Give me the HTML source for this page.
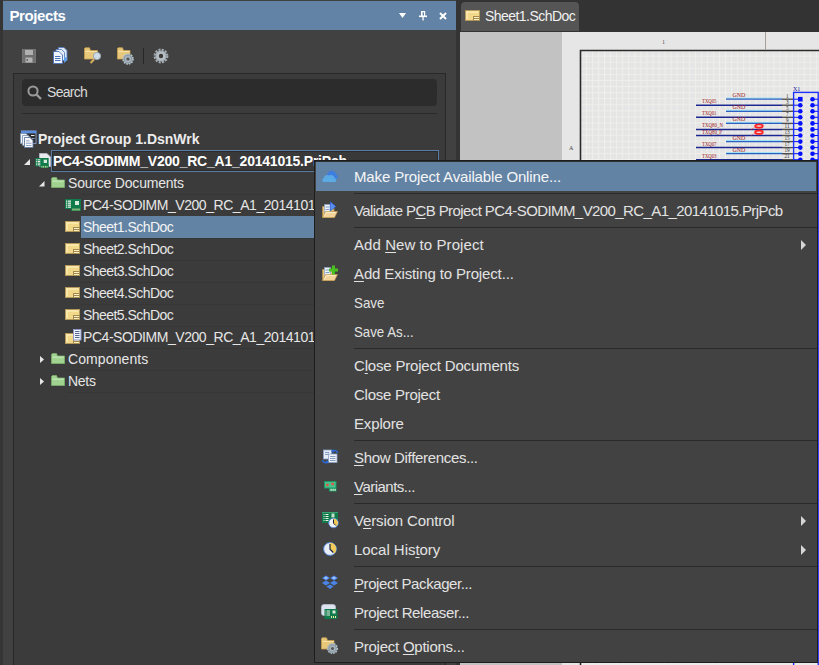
<!DOCTYPE html>
<html><head><meta charset="utf-8">
<style>
*{margin:0;padding:0;box-sizing:border-box}
html,body{width:819px;height:665px;overflow:hidden;background:#333333;font-family:"Liberation Sans",sans-serif}
.abs{position:absolute}
#lstrip{left:0;top:0;width:3px;height:665px;background:#353535}
#panel{left:3px;top:0;width:453px;height:665px;background:#414141}
#title{left:3px;top:1px;width:453px;height:29px;background:#6283a5;color:#fff;font-weight:bold;font-size:15px}
#title .t{position:absolute;left:6.5px;top:6px;letter-spacing:-0.4px}
#rstrip{left:456px;top:0;width:4px;height:665px;background:#343434}
#tabbar{left:460px;top:0;width:359px;height:32px;background:#333333}
#tab{left:461px;top:2px;width:118px;height:29px;background:#555555;border-radius:4px 4px 0 0;color:#f0f0f0;font-size:14px}
#sch{left:460px;top:32px;width:359px;height:633px;background:#c2c2c2;overflow:hidden}
#cont{left:13px;top:73px;width:433px;height:600px;border:1px solid #282828;background:#3b3b3b}
#search{left:22px;top:79px;width:415px;height:27px;background:#2c2c2c;border-radius:4px;color:#dadada;font-size:14px}
#sline{left:22px;top:113px;width:415px;height:1px;background:#2a2a2a}
.row{position:absolute;height:22px;font-size:14px;letter-spacing:-0.3px;color:#e6e6e6;white-space:nowrap}
.sh{letter-spacing:-0.55px}
.row .txt{position:absolute;top:3px}
.sep2{position:absolute;height:1px;background:#363636}
#menu{left:314px;top:160px;width:504px;height:503px;background:#424242;border:2px solid #1e1e1e;border-right:1px solid #1e1e1e;border-bottom:1px solid #1e1e1e;color:#e2e2e2;font-size:15px}
.mi{position:absolute;left:0;width:500px;height:29px;white-space:nowrap}
.mi .txt{position:absolute;left:38px;top:6px}
.mi.hl{background:#6283a4;color:#f6f6f6}
.ms{position:absolute;left:38px;width:463px;height:1px;background:#2a2a2a}
.u{text-decoration:underline;text-underline-offset:2px}
.arr{position:absolute;left:485px;top:10px;width:0;height:0;border-left:5px solid #d6d6d6;border-top:5px solid transparent;border-bottom:5px solid transparent}
svg{position:absolute;overflow:visible}
</style></head><body>
<div class="abs" id="lstrip"></div>
<div class="abs" id="panel"></div>
<div class="abs" id="title"><span class="t">Projects</span></div>
<svg style="left:399px;top:13px" width="8" height="6"><polygon points="0,0 7,0 3.5,5" fill="#ffffff"/></svg>
<svg style="left:419px;top:10px" width="8" height="11" viewBox="0 0 8 11">
 <rect x="2" y="1" width="1.6" height="5" fill="#fff"/><rect x="2" y="1" width="4" height="1.3" fill="#fff"/><rect x="5" y="1" width="1.2" height="5" fill="#fff"/>
 <rect x="0" y="5.5" width="8" height="1.6" fill="#fff"/><rect x="3.4" y="7" width="1.3" height="3.5" fill="#fff"/>
</svg>
<svg style="left:439px;top:12px" width="8" height="8"><path d="M1 1 L7 7 M7 1 L1 7" stroke="#fff" stroke-width="2"/></svg>

<div class="abs" id="rstrip"></div>
<div class="abs" id="tabbar"></div>
<div class="abs" id="tab"><svg style="left:4px;top:8px" width="15" height="11"><use href="#sheet" width="15" height="11"/></svg><span style="position:absolute;left:24px;top:6px;letter-spacing:-0.55px">Sheet1.SchDoc</span></div>
<div class="abs" id="sch"><svg style="left:0;top:0" width="359" height="633" viewBox="460 32 359 633">
<defs><pattern id="grid" x="579.9" y="49.6" width="6.05" height="6.08" patternUnits="userSpaceOnUse"><rect width="6.1" height="6.1" fill="#e5e5e5"/><rect x="0" y="0" width="6.1" height="1" fill="#efefeb"/><rect x="0" y="0" width="1" height="6.1" fill="#efefeb"/></pattern></defs>
<rect x="460" y="32" width="102" height="633" fill="#c2c2c2"/>
<rect x="562" y="32" width="257" height="633" fill="#e6e6e6"/>
<rect x="581" y="51" width="238" height="614" fill="url(#grid)"/>
<path d="M580.5 665 V50.5 H819" fill="none" stroke="#2a2a2a" stroke-width="1.6"/>
<line x1="765.5" y1="32" x2="765.5" y2="50" stroke="#a8a098" stroke-width="1"/>
<text x="662" y="43.5" font-family="Liberation Serif" font-size="6" fill="#555">1</text>
<text x="569" y="149.5" font-family="Liberation Serif" font-size="6" fill="#444">A</text>
<line x1="726" y1="98.2" x2="782" y2="98.2" stroke="#8ee0f8" stroke-width="1"/>
<line x1="726" y1="99.2" x2="782" y2="99.2" stroke="#2f5fc0" stroke-width="1.3"/>
<text x="732.5" y="97.2" font-family="Liberation Serif" font-size="5.5" fill="#a02020" textLength="12.7" lengthAdjust="spacingAndGlyphs">GND</text>
<line x1="782" y1="99.2" x2="794" y2="99.2" stroke="#505050" stroke-width="1.4"/>
<text x="786" y="97.9" font-family="Liberation Serif" font-size="5.2" fill="#303030">1</text>
<rect x="798" y="96.9" width="4.6" height="4.6" fill="#0010ff"/>
<circle cx="812.5" cy="99.2" r="2.3" fill="#0010ff"/>
<line x1="696" y1="105.2" x2="782" y2="105.2" stroke="#1c2890" stroke-width="1.5"/>
<text x="702" y="103.2" font-family="Liberation Serif" font-size="5.5" fill="#a02020" textLength="14.5" lengthAdjust="spacingAndGlyphs">TXQ05</text>
<line x1="782" y1="105.2" x2="794" y2="105.2" stroke="#505050" stroke-width="1.4"/>
<text x="786" y="104.0" font-family="Liberation Serif" font-size="5.2" fill="#303030">3</text>
<circle cx="800.3" cy="105.2" r="2.3" fill="#0010ff"/>
<circle cx="812.5" cy="105.2" r="2.3" fill="#0010ff"/>
<line x1="726" y1="110.3" x2="782" y2="110.3" stroke="#8ee0f8" stroke-width="1"/>
<line x1="726" y1="111.3" x2="782" y2="111.3" stroke="#2f5fc0" stroke-width="1.3"/>
<text x="732.5" y="109.3" font-family="Liberation Serif" font-size="5.5" fill="#a02020" textLength="12.7" lengthAdjust="spacingAndGlyphs">GND</text>
<line x1="782" y1="111.3" x2="794" y2="111.3" stroke="#505050" stroke-width="1.4"/>
<text x="786" y="110.0" font-family="Liberation Serif" font-size="5.2" fill="#303030">5</text>
<circle cx="800.3" cy="111.3" r="2.3" fill="#0010ff"/>
<circle cx="812.5" cy="111.3" r="2.3" fill="#0010ff"/>
<line x1="696" y1="117.3" x2="782" y2="117.3" stroke="#1c2890" stroke-width="1.5"/>
<text x="702" y="115.3" font-family="Liberation Serif" font-size="5.5" fill="#a02020" textLength="14.5" lengthAdjust="spacingAndGlyphs">TXQ01</text>
<line x1="782" y1="117.3" x2="794" y2="117.3" stroke="#505050" stroke-width="1.4"/>
<text x="786" y="116.0" font-family="Liberation Serif" font-size="5.2" fill="#303030">7</text>
<circle cx="800.3" cy="117.3" r="2.3" fill="#0010ff"/>
<circle cx="812.5" cy="117.3" r="2.3" fill="#0010ff"/>
<line x1="726" y1="122.4" x2="782" y2="122.4" stroke="#8ee0f8" stroke-width="1"/>
<line x1="726" y1="123.4" x2="782" y2="123.4" stroke="#2f5fc0" stroke-width="1.3"/>
<text x="732.5" y="121.4" font-family="Liberation Serif" font-size="5.5" fill="#a02020" textLength="12.7" lengthAdjust="spacingAndGlyphs">GND</text>
<line x1="782" y1="123.4" x2="794" y2="123.4" stroke="#505050" stroke-width="1.4"/>
<text x="786" y="122.1" font-family="Liberation Serif" font-size="5.2" fill="#303030">9</text>
<circle cx="800.3" cy="123.4" r="2.3" fill="#0010ff"/>
<circle cx="812.5" cy="123.4" r="2.3" fill="#0010ff"/>
<line x1="696" y1="129.4" x2="782" y2="129.4" stroke="#1c2890" stroke-width="1.5"/>
<text x="702" y="127.4" font-family="Liberation Serif" font-size="5.5" fill="#a02020" textLength="21" lengthAdjust="spacingAndGlyphs">TXQ80_N</text>
<line x1="782" y1="129.4" x2="794" y2="129.4" stroke="#505050" stroke-width="1.4"/>
<text x="784.5" y="128.1" font-family="Liberation Serif" font-size="5.2" fill="#303030">11</text>
<circle cx="800.3" cy="129.4" r="2.3" fill="#0010ff"/>
<circle cx="812.5" cy="129.4" r="2.3" fill="#0010ff"/>
<line x1="696" y1="135.5" x2="782" y2="135.5" stroke="#1c2890" stroke-width="1.5"/>
<text x="702" y="133.5" font-family="Liberation Serif" font-size="5.5" fill="#a02020" textLength="20" lengthAdjust="spacingAndGlyphs">TXQ80_P</text>
<line x1="782" y1="135.5" x2="794" y2="135.5" stroke="#505050" stroke-width="1.4"/>
<text x="784.5" y="134.2" font-family="Liberation Serif" font-size="5.2" fill="#303030">13</text>
<circle cx="800.3" cy="135.5" r="2.3" fill="#0010ff"/>
<circle cx="812.5" cy="135.5" r="2.3" fill="#0010ff"/>
<line x1="726" y1="140.6" x2="782" y2="140.6" stroke="#8ee0f8" stroke-width="1"/>
<line x1="726" y1="141.6" x2="782" y2="141.6" stroke="#2f5fc0" stroke-width="1.3"/>
<text x="732.5" y="139.6" font-family="Liberation Serif" font-size="5.5" fill="#a02020" textLength="12.7" lengthAdjust="spacingAndGlyphs">GND</text>
<line x1="782" y1="141.6" x2="794" y2="141.6" stroke="#505050" stroke-width="1.4"/>
<text x="784.5" y="140.2" font-family="Liberation Serif" font-size="5.2" fill="#303030">15</text>
<circle cx="800.3" cy="141.6" r="2.3" fill="#0010ff"/>
<circle cx="812.5" cy="141.6" r="2.3" fill="#0010ff"/>
<line x1="696" y1="147.6" x2="782" y2="147.6" stroke="#1c2890" stroke-width="1.5"/>
<text x="702" y="145.6" font-family="Liberation Serif" font-size="5.5" fill="#a02020" textLength="14.5" lengthAdjust="spacingAndGlyphs">TXQ07</text>
<line x1="782" y1="147.6" x2="794" y2="147.6" stroke="#505050" stroke-width="1.4"/>
<text x="784.5" y="146.3" font-family="Liberation Serif" font-size="5.2" fill="#303030">17</text>
<circle cx="800.3" cy="147.6" r="2.3" fill="#0010ff"/>
<circle cx="812.5" cy="147.6" r="2.3" fill="#0010ff"/>
<line x1="726" y1="152.7" x2="782" y2="152.7" stroke="#8ee0f8" stroke-width="1"/>
<line x1="726" y1="153.7" x2="782" y2="153.7" stroke="#2f5fc0" stroke-width="1.3"/>
<text x="732.5" y="151.7" font-family="Liberation Serif" font-size="5.5" fill="#a02020" textLength="12.7" lengthAdjust="spacingAndGlyphs">GND</text>
<line x1="782" y1="153.7" x2="794" y2="153.7" stroke="#505050" stroke-width="1.4"/>
<text x="784.5" y="152.3" font-family="Liberation Serif" font-size="5.2" fill="#303030">19</text>
<circle cx="800.3" cy="153.7" r="2.3" fill="#0010ff"/>
<circle cx="812.5" cy="153.7" r="2.3" fill="#0010ff"/>
<line x1="696" y1="159.7" x2="782" y2="159.7" stroke="#1c2890" stroke-width="1.5"/>
<text x="702" y="157.7" font-family="Liberation Serif" font-size="5.5" fill="#a02020" textLength="14.5" lengthAdjust="spacingAndGlyphs">TXQ03</text>
<line x1="782" y1="159.7" x2="794" y2="159.7" stroke="#505050" stroke-width="1.4"/>
<text x="784.5" y="158.4" font-family="Liberation Serif" font-size="5.2" fill="#303030">21</text>
<circle cx="800.3" cy="159.7" r="2.3" fill="#0010ff"/>
<circle cx="812.5" cy="159.7" r="2.3" fill="#0010ff"/>
<rect x="793.6" y="92.4" width="24.6" height="600" fill="none" stroke="#2030ff" stroke-width="1.4"/><line x1="794" y1="99.2" x2="800" y2="99.2" stroke="#0010ff" stroke-width="1"/><line x1="794" y1="105.2" x2="800" y2="105.2" stroke="#0010ff" stroke-width="1"/><line x1="794" y1="111.3" x2="800" y2="111.3" stroke="#0010ff" stroke-width="1"/><line x1="794" y1="117.3" x2="800" y2="117.3" stroke="#0010ff" stroke-width="1"/><line x1="794" y1="123.4" x2="800" y2="123.4" stroke="#0010ff" stroke-width="1"/><line x1="794" y1="129.4" x2="800" y2="129.4" stroke="#0010ff" stroke-width="1"/><line x1="794" y1="135.5" x2="800" y2="135.5" stroke="#0010ff" stroke-width="1"/><line x1="794" y1="141.6" x2="800" y2="141.6" stroke="#0010ff" stroke-width="1"/><line x1="794" y1="147.6" x2="800" y2="147.6" stroke="#0010ff" stroke-width="1"/><line x1="794" y1="153.7" x2="800" y2="153.7" stroke="#0010ff" stroke-width="1"/><line x1="794" y1="159.7" x2="800" y2="159.7" stroke="#0010ff" stroke-width="1"/><line x1="812" y1="99.2" x2="818" y2="99.2" stroke="#0010ff" stroke-width="1"/><line x1="812" y1="105.2" x2="818" y2="105.2" stroke="#0010ff" stroke-width="1"/><line x1="812" y1="111.3" x2="818" y2="111.3" stroke="#0010ff" stroke-width="1"/><line x1="812" y1="117.3" x2="818" y2="117.3" stroke="#0010ff" stroke-width="1"/><line x1="812" y1="123.4" x2="818" y2="123.4" stroke="#0010ff" stroke-width="1"/><line x1="812" y1="129.4" x2="818" y2="129.4" stroke="#0010ff" stroke-width="1"/><line x1="812" y1="135.5" x2="818" y2="135.5" stroke="#0010ff" stroke-width="1"/><line x1="812" y1="141.6" x2="818" y2="141.6" stroke="#0010ff" stroke-width="1"/><line x1="812" y1="147.6" x2="818" y2="147.6" stroke="#0010ff" stroke-width="1"/><line x1="812" y1="153.7" x2="818" y2="153.7" stroke="#0010ff" stroke-width="1"/><line x1="812" y1="159.7" x2="818" y2="159.7" stroke="#0010ff" stroke-width="1"/>
<text x="793" y="90.5" font-family="Liberation Serif" font-size="6" fill="#2020a0">X1</text>
<g fill="none" stroke="#ff2020"><ellipse cx="759" cy="126" rx="3.8" ry="1.7" stroke-width="1.8"/><ellipse cx="759" cy="132.2" rx="3.8" ry="1.7" stroke-width="1.8"/><path d="M751 130 L755 126.5 M751 136 L755 132.5" stroke-width="0.7" stroke-dasharray="1 0.8"/></g>
</svg></div>
<div class="abs" id="cont"></div>
<div class="abs" id="search"><span style="position:absolute;left:25px;top:5px;letter-spacing:-0.7px">Search</span></div>
<div class="abs" id="sline"></div>
<svg style="left:22px;top:49px" width="14" height="14" viewBox="0 0 14 14">
 <rect x="0.5" y="0.5" width="13" height="13" fill="#6e6e6e" stroke="#767676"/>
 <rect x="3" y="1" width="8" height="5" fill="#b0b0b0"/>
 <rect x="3.5" y="8.5" width="7" height="5" fill="#b4b4b4"/><rect x="4.5" y="10" width="1.5" height="2" fill="#6a6a6a"/>
</svg>
<svg style="left:53px;top:47px" width="16" height="17" viewBox="0 0 16 17">
 <path d="M5.5 0.5 H11 L14 3.5 V11.5 H5.5 Z" fill="#dfe8f5" stroke="#5a80c0" stroke-width="0.9"/>
 <path d="M3 2.5 H8.5 L11.5 5.5 V13.5 H3 Z" fill="#e6eef8" stroke="#5a80c0" stroke-width="0.9"/>
 <path d="M0.5 4.5 H6 L9.5 8 V16.5 H0.5 Z" fill="#f0f5fc" stroke="#4a72b8" stroke-width="0.9"/>
 <rect x="2" y="9" width="5.5" height="1" fill="#4a72b8"/><rect x="2" y="11" width="5.5" height="1" fill="#4a72b8"/><rect x="2" y="13" width="5.5" height="1" fill="#4a72b8"/>
 <polygon points="11,9 15,12.5 11,16" fill="#5f9ee8"/>
</svg>
<svg style="left:84px;top:47px" width="18" height="17" viewBox="0 0 18 17">
 <path d="M0.5 1.5 V12 H13.5 V3.5 H6.5 L5.5 0.8 H1.2 Z" fill="#e8c77a" stroke="#c8a050" stroke-width="0.8"/>
 <rect x="1.2" y="4" width="12" height="1" fill="#f6e3a8"/>
 <path d="M10 12.5 L6.5 16" stroke="#d8b060" stroke-width="2"/>
 <circle cx="13" cy="9" r="3.6" fill="#d0dde8" stroke="#9aa8b4" stroke-width="1"/>
</svg>
<svg style="left:117px;top:47px" width="18" height="18" viewBox="0 0 18 18">
 <path d="M0.5 1.5 V12 H13 V3.5 H6.5 L5.5 0.8 H1.2 Z" fill="#e8c77a" stroke="#c8a050" stroke-width="0.8"/>
 <rect x="1.2" y="4" width="11.5" height="1" fill="#f6e3a8"/>
 <circle cx="11" cy="12" r="5" fill="#8a9aa4" stroke="#b8c4cc" stroke-width="1.6" stroke-dasharray="1.6 1"/>
 <circle cx="11" cy="12" r="3.2" fill="#a8b4bc"/>
 <circle cx="11" cy="12" r="1.6" fill="#555"/>
</svg>
<div class="abs" style="left:143px;top:48px;width:1px;height:16px;background:#262626"></div>
<svg style="left:153px;top:48px" width="16" height="16" viewBox="0 0 16 16">
 <circle cx="8" cy="8" r="6.4" fill="none" stroke="#a3acb2" stroke-width="2" stroke-dasharray="2.1 1.25"/>
 <circle cx="8" cy="8" r="5.6" fill="#a9b2b8"/>
 <circle cx="8" cy="8" r="4" fill="#b8c0c6"/>
 <circle cx="8" cy="8" r="2.2" fill="#3a3a3a"/>
</svg>
<svg style="left:27px;top:85px" width="16" height="16" viewBox="0 0 16 16">
 <circle cx="6" cy="6" r="4.6" fill="none" stroke="#9a9a9a" stroke-width="2"/>
 <path d="M9.5 9.5 L14 14" stroke="#9a9a9a" stroke-width="2.4"/>
</svg>

<div class="abs" id="tree">
<svg width="0" height="0" style="position:absolute">
 <defs>
  <symbol id="sheet" viewBox="0 0 15 11">
   <rect x="0.5" y="0.5" width="14" height="10" fill="#f2d889" stroke="#b39a5c"/>
   <rect x="1.5" y="1.5" width="12" height="1" fill="#fff3c8"/>
   <rect x="1.5" y="1.5" width="1" height="8" fill="#fff3c8"/>
   <rect x="8" y="6" width="6.5" height="4.5" fill="#a08850"/>
   <rect x="9" y="7" width="5" height="1" fill="#fff0c0"/>
   <rect x="9" y="9" width="5" height="1" fill="#fff0c0"/>
  </symbol>
  <symbol id="folder" viewBox="0 0 14 11">
   <path d="M0.5 1.5 L0.5 10.5 L13.5 10.5 L13.5 3 L6.5 3 L5.5 0.5 L1.5 0.5 Z" fill="#9fd38f" stroke="#7fb070" stroke-width="0.8"/>
   <rect x="1.3" y="3.6" width="11.5" height="1.2" fill="#c4e8b8"/>
  </symbol>
  <symbol id="pcb" viewBox="0 0 16 12">
   <rect x="0" y="0" width="16" height="10" fill="#0f7a4a"/>
   <rect x="6" y="8" width="10" height="4" fill="#0f7a4a"/>
   <rect x="1" y="1.5" width="1.3" height="1.3" fill="#e8f0e8"/><rect x="3" y="1.5" width="3" height="1.3" fill="#e8f0e8"/>
   <rect x="1" y="3.5" width="1.3" height="1.3" fill="#e8f0e8"/><rect x="3" y="3.5" width="3" height="1.3" fill="#e8f0e8"/>
   <rect x="1" y="5.5" width="1.3" height="1.3" fill="#e8f0e8"/><rect x="3" y="5.5" width="3" height="1.3" fill="#e8f0e8"/>
   <rect x="1" y="7.5" width="1.3" height="1.3" fill="#e8f0e8"/><rect x="3" y="7.5" width="3" height="1.3" fill="#e8f0e8"/>
   <rect x="10" y="2" width="4" height="4" fill="#d8e8dc"/>
   <rect x="7.5" y="9.5" width="1" height="2" fill="#f0e8a0"/><rect x="9.5" y="9.5" width="1" height="2" fill="#f0e8a0"/>
   <rect x="11.5" y="9.5" width="1" height="2" fill="#f0e8a0"/><rect x="13.5" y="9.5" width="1" height="2" fill="#f0e8a0"/>
  </symbol>
 </defs>
</svg>
<!-- separators -->
<div class="sep2" style="left:81px;top:194px;width:364px"></div>
<div class="sep2" style="left:81px;top:238px;width:364px"></div>
<div class="sep2" style="left:81px;top:260px;width:364px"></div>
<div class="sep2" style="left:81px;top:282px;width:364px"></div>
<div class="sep2" style="left:81px;top:304px;width:364px"></div>
<div class="sep2" style="left:81px;top:326px;width:364px"></div>
<div class="sep2" style="left:66px;top:348px;width:379px"></div>
<div class="sep2" style="left:66px;top:370px;width:379px"></div>
<div class="sep2" style="left:66px;top:392px;width:379px"></div>
<!-- project group -->
<svg style="left:20px;top:130px" width="17" height="18" viewBox="0 0 17 18">
 <rect x="1.5" y="1" width="14.5" height="12.5" fill="#2e2e2e" stroke="#8aa0c8" stroke-width="0.9"/>
 <rect x="1" y="0.8" width="15.3" height="2.6" fill="#5b8ee0"/>
 <rect x="11" y="5" width="3.5" height="1" fill="#e8e8e8"/><rect x="12" y="8" width="2.5" height="1" fill="#8aa0c8"/>
 <path d="M0.5 3.5 H6 L9 6.5 V13.5 H0.5 Z" fill="#f2f5fa" stroke="#7890b0" stroke-width="0.8"/>
 <path d="M2.5 5.5 H8 L11 8.5 V15.5 H2.5 Z" fill="#f2f5fa" stroke="#7890b0" stroke-width="0.8"/>
 <path d="M4.5 7.5 H10 L13 10.5 V17.5 H4.5 Z" fill="#f6f8fc" stroke="#5f78a0" stroke-width="0.9"/>
 <rect x="6" y="10.5" width="3.5" height="0.8" fill="#7890b8"/><rect x="6" y="12.8" width="5.5" height="0.8" fill="#7890b8"/><rect x="6" y="15" width="5.5" height="0.8" fill="#7890b8"/>
</svg>
<div class="row" style="left:38px;top:128px;font-weight:bold;font-size:14px;letter-spacing:0;color:#ececec"><span class="txt" style="left:0">Project Group 1.DsnWrk</span></div>
<!-- prjpcb -->
<div class="abs" style="left:51px;top:150px;width:388px;height:22px;background:#393939;border:1px solid #5a7ea3;box-shadow:inset 0 0 0 1px #2a2a2a"></div>
<svg style="left:24px;top:159px" width="6" height="6"><polygon points="6,0 6,6 0,6" fill="#e6e6e6"/></svg>
<svg style="left:39px;top:153px" width="12" height="14"><path d="M0.5 0.5 H8 L11.5 4 V13.5 H0.5 Z" fill="#e8eaf0" stroke="#b8bccc" stroke-width="0.8"/></svg>
<svg style="left:35px;top:158px" width="14" height="10"><use href="#pcb" width="14" height="10"/></svg>
<div class="row" style="left:53px;top:150px;font-weight:bold;font-size:14px;letter-spacing:-0.22px;color:#ffffff"><span class="txt" style="left:0">PC4-SODIMM_V200_RC_A1_20141015.PrjPcb</span></div>
<!-- source docs -->
<svg style="left:39px;top:181px" width="6" height="6"><polygon points="5.5,0 5.5,5.5 0,5.5" fill="#e6e6e6"/></svg>
<svg style="left:51px;top:177px" width="14" height="12"><use href="#folder" width="14" height="11"/></svg>
<div class="row" style="left:68px;top:172px"><span class="txt" style="left:0;letter-spacing:-0.2px">Source Documents</span></div>
<!-- pcbdoc -->
<svg style="left:65px;top:199px" width="16" height="12"><use href="#pcb" width="16" height="12"/></svg>
<div class="row" style="left:83px;top:194px"><span class="txt" style="left:0;letter-spacing:-0.45px">PC4-SODIMM_V200_RC_A1_20141015.PcbDoc</span></div>
<!-- sheets -->
<div class="abs" style="left:81px;top:216px;width:240px;height:22px;background:#6283a4"></div>
<svg style="left:65px;top:221px" width="15" height="11"><use href="#sheet" width="15" height="11"/></svg>
<div class="row" style="left:83px;top:216px;color:#f4f4f4"><span class="txt sh" style="left:0">Sheet1.SchDoc</span></div>
<svg style="left:65px;top:243px" width="15" height="11"><use href="#sheet" width="15" height="11"/></svg>
<div class="row" style="left:83px;top:238px"><span class="txt sh" style="left:0">Sheet2.SchDoc</span></div>
<svg style="left:65px;top:265px" width="15" height="11"><use href="#sheet" width="15" height="11"/></svg>
<div class="row" style="left:83px;top:260px"><span class="txt sh" style="left:0">Sheet3.SchDoc</span></div>
<svg style="left:65px;top:287px" width="15" height="11"><use href="#sheet" width="15" height="11"/></svg>
<div class="row" style="left:83px;top:282px"><span class="txt sh" style="left:0">Sheet4.SchDoc</span></div>
<svg style="left:65px;top:309px" width="15" height="11"><use href="#sheet" width="15" height="11"/></svg>
<div class="row" style="left:83px;top:304px"><span class="txt sh" style="left:0">Sheet5.SchDoc</span></div>
<!-- outjob -->
<svg style="left:65px;top:329px" width="17" height="16" viewBox="0 0 17 16">
 <svg x="0" y="4" width="15" height="11" viewBox="0 0 15 11"><use href="#sheet" width="15" height="11"/></svg>
 <rect x="8.5" y="0.5" width="7.5" height="10.5" fill="#eef4fc" stroke="#9098c8" stroke-width="1"/>
 <rect x="10" y="2" width="4.5" height="1" fill="#5a6890"/><rect x="10" y="4" width="4.5" height="1" fill="#5a6890"/><rect x="10" y="6" width="4.5" height="1" fill="#5a6890"/><rect x="10" y="8" width="4.5" height="1" fill="#5a6890"/>
</svg>
<div class="row" style="left:83px;top:326px"><span class="txt" style="left:0;letter-spacing:-0.45px">PC4-SODIMM_V200_RC_A1_20141015.OutJob</span></div>
<!-- components / nets -->
<svg style="left:40px;top:356px" width="5" height="8"><polygon points="0,0 4,3.5 0,7" fill="#e6e6e6"/></svg>
<svg style="left:51px;top:353px" width="14" height="12"><use href="#folder" width="14" height="11"/></svg>
<div class="row" style="left:68px;top:348px"><span class="txt" style="left:0;letter-spacing:0.1px">Components</span></div>
<svg style="left:40px;top:378px" width="5" height="8"><polygon points="0,0 4,3.5 0,7" fill="#e6e6e6"/></svg>
<svg style="left:51px;top:375px" width="14" height="12"><use href="#folder" width="14" height="11"/></svg>
<div class="row" style="left:68px;top:370px"><span class="txt" style="left:0">Nets</span></div>
</div>
<div class="abs" id="menu">
 <div style="position:absolute;left:-1px;top:0;width:1px;height:500px;background:#424242"></div>
 <div style="position:absolute;left:0;top:-1px;width:501px;height:1px;background:#303030"></div>
 <div class="mi hl" style="top:0"><svg style="left:6px;top:8px" width="17" height="13" viewBox="0 0 17 13">
 <path d="M5 6 C5 2.5 8 0 11 1 C13 1.5 14 3 14 4.5 C16 5 16.5 7 15.5 8.5 L14 9" fill="#3d7ee0"/>
 <path d="M2 12 C0 12 -0.5 8.5 2 8 C2 5.5 5 4 7.5 5.5 C9 4.5 12 5 12.5 8 C14.5 8 15 12 13 12 Z" fill="#5aaae6"/>
</svg><span class="txt" style="letter-spacing:-0.141px">Make Project Available Online...</span></div>
 <div class="ms" style="top:31px"></div>
 <svg style="left:6px;top:39px" width="17" height="17" viewBox="0 -5 17 17"><path d="M0.5 0.5 V11.5 H12 V2 H6 L5 0.5 Z" fill="#e6c27a" stroke="#b8944c" stroke-width="0.7"/>
 <path d="M2.5 -1.5 H8.5 V7 H2.5 Z" fill="#eef3fa" stroke="#8aa4cc" stroke-width="0.7"/>
 <rect x="3.5" y="0.6" width="4" height="0.8" fill="#6a88b8"/><rect x="3.5" y="3" width="4" height="0.8" fill="#6a88b8"/>
 <path d="M0.8 11.5 L3.5 5.5 H15.5 L12.5 11.5 Z" fill="#f2d49a" stroke="#c09a55" stroke-width="0.7"/>
 <path d="M2.3 10.5 L4.3 6.6 H13.6" fill="none" stroke="#fff2d0" stroke-width="0.8"/>
 <polygon points="8.3,-4.3 13.8,0.5 8.3,5" fill="#5a90f0" stroke="#2a5ad0" stroke-width="0.7"/>
</svg>
 <div class="mi" style="top:34px"><span class="txt" style="letter-spacing:-0.584px">Validate P<span class="u">C</span>B Project PC4-SODIMM_V200_RC_A1_20141015.PrjPcb</span></div>
 <div class="ms" style="top:65px"></div>
 <div class="mi" style="top:68px"><span class="txt" style="letter-spacing:0.072px">Add <span class="u">N</span>ew to Project</span><div class="arr"></div></div>
 <svg style="left:6px;top:102px" width="17" height="17" viewBox="0 -5 17 17"><path d="M0.5 0.5 V11.5 H12 V2 H6 L5 0.5 Z" fill="#e6c27a" stroke="#b8944c" stroke-width="0.7"/>
 <path d="M2.5 -1.5 H8.5 V7 H2.5 Z" fill="#eef3fa" stroke="#8aa4cc" stroke-width="0.7"/>
 <rect x="3.5" y="0.6" width="4" height="0.8" fill="#6a88b8"/><rect x="3.5" y="3" width="4" height="0.8" fill="#6a88b8"/>
 <path d="M0.8 11.5 L3.5 5.5 H15.5 L12.5 11.5 Z" fill="#f2d49a" stroke="#c09a55" stroke-width="0.7"/>
 <path d="M2.3 10.5 L4.3 6.6 H13.6" fill="none" stroke="#fff2d0" stroke-width="0.8"/>
 <path d="M11.5 -3.5 V5.5 M7 1 H16" stroke="#48c020" stroke-width="3"/>
</svg>
 <div class="mi" style="top:97px"><span class="txt" style="letter-spacing:-0.143px"><span class="u">A</span>dd Existing to Project...</span></div>
 <div class="mi" style="top:126px"><span class="txt" style="transform:scaleX(0.892);transform-origin:0 0">Save</span></div>
 <div class="mi" style="top:155px"><span class="txt" style="transform:scaleX(0.884);transform-origin:0 0">Save As...</span></div>
 <div class="ms" style="top:186px"></div>
 <div class="mi" style="top:189px"><span class="txt" style="letter-spacing:-0.184px">C<span class="u">l</span>ose Project Documents</span></div>
 <div class="mi" style="top:218px"><span class="txt" style="letter-spacing:-0.262px">Close Project</span></div>
 <div class="mi" style="top:247px"><span class="txt" style="letter-spacing:-0.151px">Explore</span></div>
 <div class="ms" style="top:278px"></div>
 <svg style="left:6px;top:287px" width="17" height="16" viewBox="0 0 17 16">
 <rect x="1.5" y="1" width="8" height="9" fill="#e6ecf6" stroke="#8aa0c8" stroke-width="0.8"/>
 <rect x="3" y="3" width="4" height="0.9" fill="#7890b8"/><rect x="3" y="5" width="4" height="0.9" fill="#7890b8"/>
 <rect x="6.5" y="5" width="8.5" height="8.5" fill="#eef2f8" stroke="#8aa0c8" stroke-width="0.8"/>
 <rect x="8" y="7" width="5.5" height="0.9" fill="#7890b8"/><rect x="8" y="9" width="5.5" height="0.9" fill="#7890b8"/><rect x="8" y="11" width="5.5" height="0.9" fill="#7890b8"/>
 <path d="M15.5 4 C15 1.5 13 1 11 2" fill="none" stroke="#2a6ae0" stroke-width="1.4"/><polygon points="9,2 11.5,0 11.5,4" fill="#2a6ae0"/>
 <path d="M0.5 11 C1 13.5 3 14 5 13" fill="none" stroke="#2a6ae0" stroke-width="1.4"/><polygon points="7,13 4.5,11 4.5,15" fill="#2a6ae0"/>
</svg>
 <div class="mi" style="top:281px"><span class="txt" style="letter-spacing:-0.321px"><span class="u">S</span>how Differences...</span></div>
 <svg style="left:8px;top:319px" width="13" height="11" viewBox="0 0 13 11">
 <path d="M0 0 H12.5 V10.5 H5 V7.5 H0 Z" fill="#189a62"/>
 <rect x="1" y="1" width="10.5" height="5.5" fill="#48c090"/>
 <path d="M2.2 2.8 L4.6 5.2 M4.6 2.8 L2.2 5.2 M7.4 1.8 L9.8 4.2 M9.8 1.8 L7.4 4.2" stroke="#f04a3a" stroke-width="1.1"/>
 <rect x="6.5" y="7.8" width="1.2" height="2" fill="#f0f4e0"/><rect x="8.5" y="7.8" width="1.2" height="2" fill="#f0f4e0"/><rect x="10.5" y="7.8" width="1.2" height="2" fill="#f0f4e0"/>
</svg>
 <div class="mi" style="top:310px"><span class="txt" style="letter-spacing:-0.511px"><span class="u">V</span>ariants...</span></div>
 <div class="ms" style="top:341px"></div>
 <svg style="left:6px;top:350px" width="17" height="17" viewBox="0 0 17 17">
 <rect x="0" y="0" width="16" height="11" fill="#0f7a4a"/>
 <rect x="0" y="0" width="16" height="1" fill="#3aa070"/>
 <rect x="1.5" y="2" width="1" height="1" fill="#e8f0e8"/><rect x="3.5" y="2" width="3" height="1" fill="#e8f0e8"/>
 <rect x="1.5" y="4" width="1" height="1" fill="#e8f0e8"/><rect x="3.5" y="4" width="3" height="1" fill="#e8f0e8"/>
 <rect x="1.5" y="6" width="1" height="1" fill="#e8f0e8"/><rect x="3.5" y="6" width="3" height="1" fill="#e8f0e8"/>
 <rect x="1.5" y="8" width="1" height="1" fill="#e8f0e8"/><rect x="3.5" y="8" width="3" height="1" fill="#e8f0e8"/>
 <rect x="9.5" y="1.5" width="3" height="4" fill="#c8dccc"/>
 <circle cx="11.5" cy="11" r="4.8" fill="#eef2f8" stroke="#4a80d0" stroke-width="0.9"/>
 <path d="M11.5 6.6 A4.4 4.4 0 0 1 14.6 14.1 L11.5 11 Z" fill="#f0c850"/><path d="M11.5 7.5 V11.2 L13.8 13.5" fill="none" stroke="#223" stroke-width="1"/>
</svg>
 <div class="mi" style="top:344px"><span class="txt" style="letter-spacing:-0.144px">V<span class="u">e</span>rsion Control</span><div class="arr"></div></div>
 <svg style="left:7px;top:380px" width="15" height="15" viewBox="0 0 15 15">
 <circle cx="7" cy="7" r="6.4" fill="#e8eef8" stroke="#4a80d0" stroke-width="1"/>
 <path d="M7 0.8 A6.2 6.2 0 0 1 11.4 11.4 L7 7 Z" fill="#f2cc5a"/>
 <path d="M7 2 V7.2 L10.3 10.5" fill="none" stroke="#1a2440" stroke-width="1.2"/>
</svg>
 <div class="mi" style="top:373px"><span class="txt" style="letter-spacing:-0.031px">Local His<span class="u">t</span>ory</span><div class="arr"></div></div>
 <div class="ms" style="top:404px"></div>
 <svg style="left:6px;top:413px" width="16" height="15" viewBox="0 0 16 15">
 <polygon points="4,0.5 8,3 4,5.5 0,3" fill="#4a84e8"/><polygon points="12,0.5 16,3 12,5.5 8,3" fill="#4a84e8"/>
 <polygon points="4,5.5 8,8 4,10.5 0,8" fill="#4a84e8"/><polygon points="12,5.5 16,8 12,10.5 8,8" fill="#4a84e8"/>
 <polygon points="8,9.5 11.5,11.5 8,14 4.5,11.5" fill="#4a84e8"/>
 <polygon points="4,1.5 6.3,3 4,4.5 1.7,3" fill="#9cc4f8"/><polygon points="12,1.5 14.3,3 12,4.5 9.7,3" fill="#9cc4f8"/>
</svg>
 <div class="mi" style="top:407px"><span class="txt" style="letter-spacing:-0.416px"><span class="u">P</span>roject Packager...</span></div>
 <svg style="left:5px;top:442px" width="18" height="16" viewBox="0 0 18 16">
 <rect x="0.5" y="0.5" width="14" height="11" rx="2.5" fill="#dde3ee" stroke="#b8c0d0" stroke-width="0.8"/>
 <rect x="3.5" y="5" width="13" height="10" fill="#0f7a4a"/>
 <rect x="4.5" y="6.5" width="1" height="1" fill="#e8f0e8"/><rect x="6" y="6.5" width="3" height="1" fill="#e8f0e8"/>
 <rect x="4.5" y="8.5" width="1" height="1" fill="#e8f0e8"/><rect x="6" y="8.5" width="3" height="1" fill="#e8f0e8"/>
 <rect x="4.5" y="10.5" width="1" height="1" fill="#e8f0e8"/><rect x="6" y="10.5" width="3" height="1" fill="#e8f0e8"/>
 <rect x="11.5" y="6.5" width="3" height="3" fill="#d8e8dc"/>
 <rect x="10" y="12" width="1" height="2" fill="#f0e8a0"/><rect x="12" y="12" width="1" height="2" fill="#f0e8a0"/><rect x="14" y="12" width="1" height="2" fill="#f0e8a0"/>
</svg>
 <div class="mi" style="top:436px"><span class="txt" style="letter-spacing:-0.398px">Project Releaser...</span></div>
 <div class="ms" style="top:467px"></div>
 <svg style="left:5px;top:475px" width="18" height="17" viewBox="0 0 18 17">
 <path d="M0.5 1.5 V12 H13 V3.5 H6.5 L5.5 0.8 H1.2 Z" fill="#e8c77a" stroke="#c8a050" stroke-width="0.8"/>
 <rect x="1.2" y="4" width="11.5" height="1" fill="#f6e3a8"/>
 <circle cx="11.5" cy="11.5" r="4.8" fill="#8a9aa4" stroke="#b0bcc4" stroke-width="1.6" stroke-dasharray="1.6 1"/>
 <circle cx="11.5" cy="11.5" r="3" fill="#a8b4bc"/>
 <circle cx="11.5" cy="11.5" r="1.5" fill="#555"/>
</svg>
 <div class="mi" style="top:470px"><span class="txt" style="letter-spacing:-0.248px">Project <span class="u">O</span>ptions...</span></div>
</div>
</body></html>
